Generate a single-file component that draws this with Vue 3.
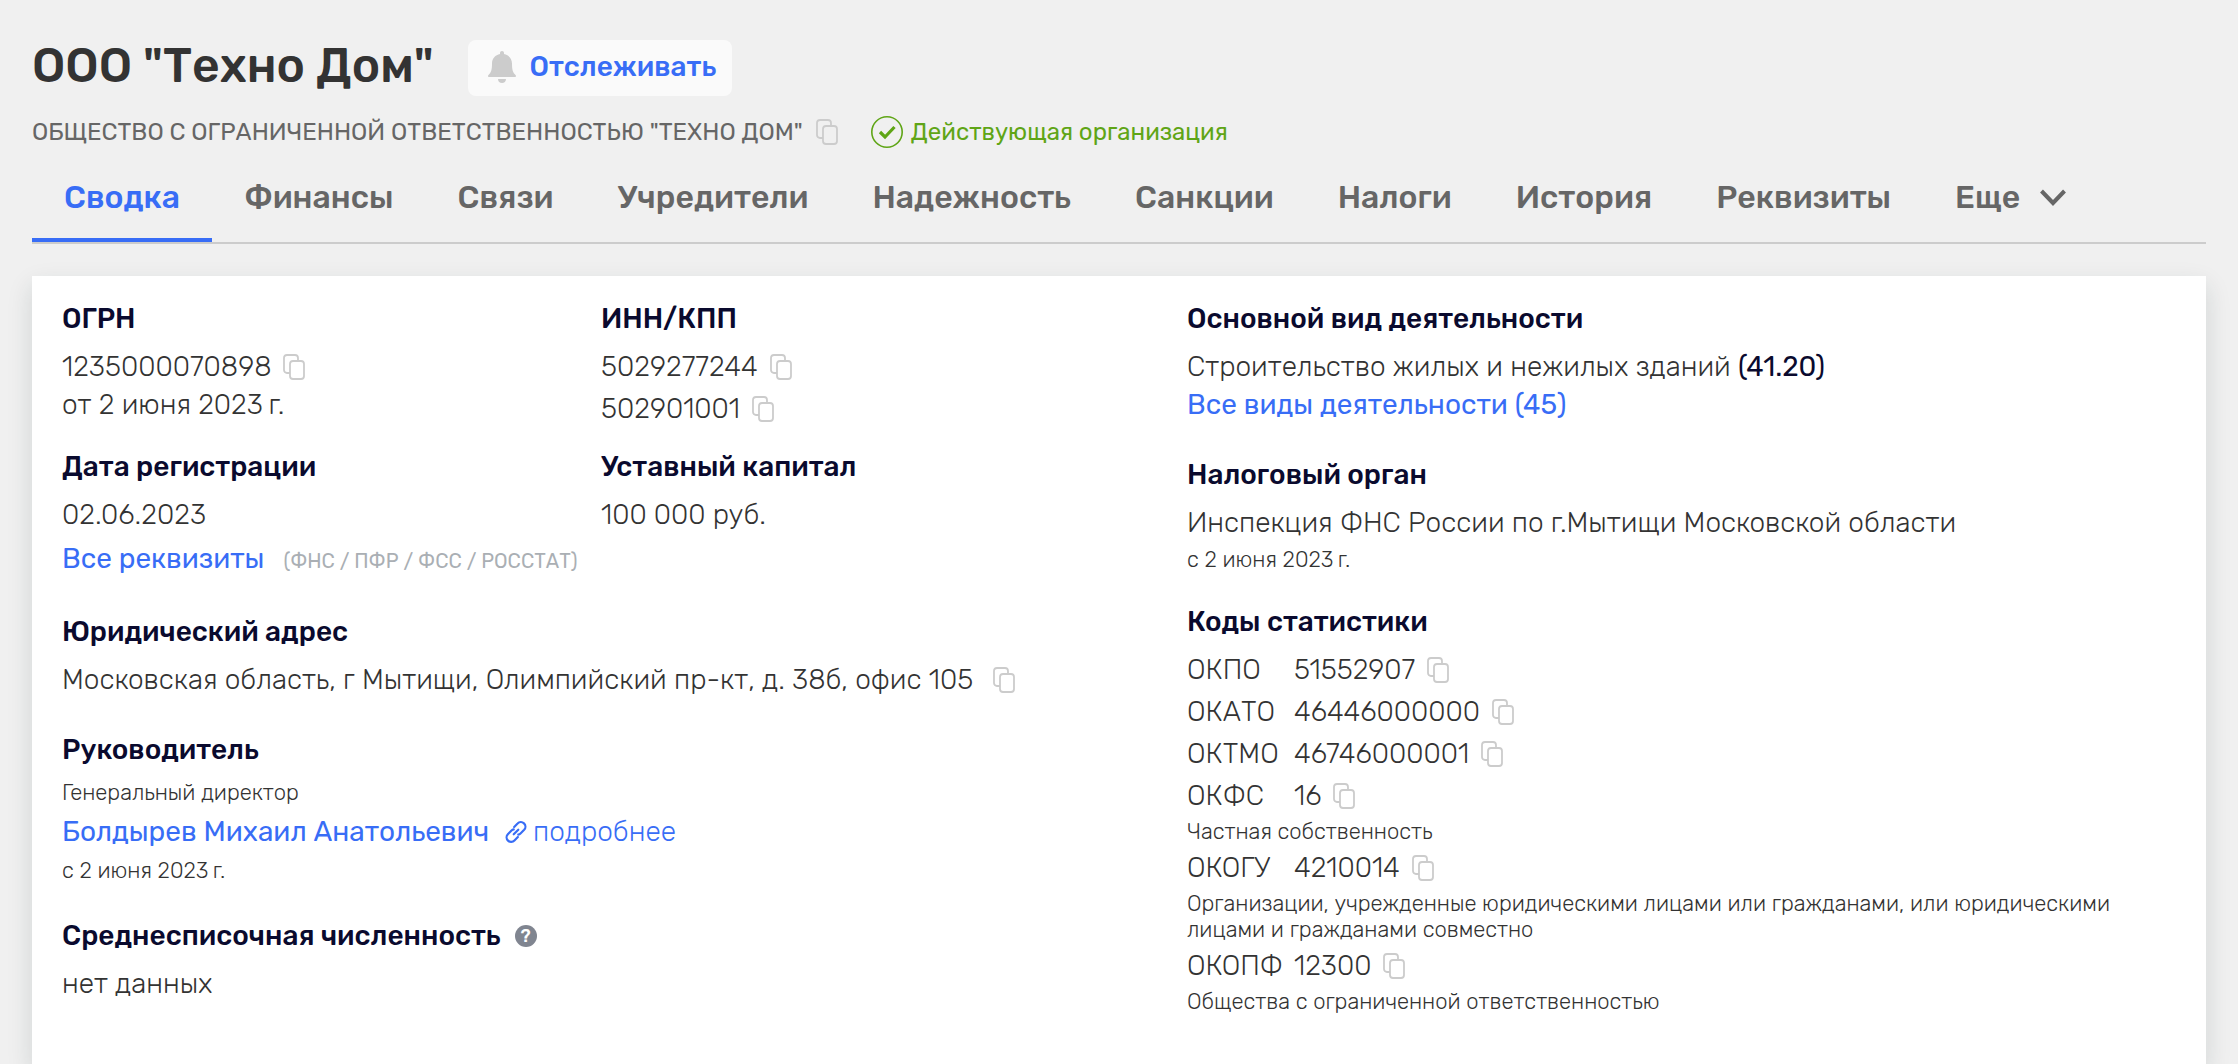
<script setup>
import { h } from 'vue'

const tabs = ['Сводка', 'Финансы', 'Связи', 'Учредители', 'Надежность', 'Санкции', 'Налоги', 'История', 'Реквизиты']

const codes = [
  { name: 'ОКПО', value: '51552907' },
  { name: 'ОКАТО', value: '46446000000' },
  { name: 'ОКТМО', value: '46746000001' },
  { name: 'ОКФС', value: '16', note: 'Частная собственность' },
  { name: 'ОКОГУ', value: '4210014', note: 'Организации, учрежденные юридическими лицами или гражданами, или юридическими лицами и гражданами совместно' },
  { name: 'ОКОПФ', value: '12300', note: 'Общества с ограниченной ответственностью' },
]

const CopyButton = () =>
  h('button', { type: 'button', class: 'copy', 'aria-label': 'Копировать' }, [
    h('svg', { width: 22, height: 26, viewBox: '0 0 22 26', fill: 'none', stroke: '#ccc', 'stroke-width': 1.8 }, [
      h('path', { d: 'M7 19H4a3 3 0 0 1-3-3V4a3 3 0 0 1 3-3h8a3 3 0 0 1 3 3v3' }),
      h('rect', { x: 7, y: 7, width: 14, height: 18, rx: 3 }),
    ]),
  ])
</script>

<template>
  <div class="page">
    <header>
      <div class="title-row">
        <h1>ООО "Техно Дом"</h1>
        <button type="button" class="track">
          <svg width="28" height="32" viewBox="0 0 28 32" fill="#ccc">
            <path d="M14 0c1.200 0 2 .9 2 2v1c4.600.9 8 4.600 8 9.500 0 7 1 9 3.500 11.500.9.9.5 2-.7 2H1.200C0 26-.4 24.900.5 24 3 21.500 4 19.500 4 12.500 4 7.600 7.400 3.900 12 3V2c0-1.100.8-2 2-2z" />
            <path d="M10 28h8c0 2.400-1.700 4-4 4s-4-1.600-4-4z" />
          </svg>
          Отслеживать
        </button>
      </div>
      <div class="sub-row">
        <span>ОБЩЕСТВО С ОГРАНИЧЕННОЙ ОТВЕТСТВЕННОСТЬЮ "ТЕХНО ДОМ"</span>
        <CopyButton />
        <span class="status">
          <svg width="32" height="32" viewBox="0 0 32 32" fill="none" stroke="#5fa516">
            <circle cx="16" cy="16" r="15.2" stroke-width="1.6" />
            <path d="M9 16l5 5 9.500-10" stroke-width="3.2" />
          </svg>
          Действующая организация
        </span>
      </div>
      <nav>
        <a v-for="(t, i) in tabs" :key="t" href="#" :class="{ active: i === 0 }">{{ t }}</a>
        <button type="button" class="more">
          Еще
          <svg width="26" height="17" viewBox="0 0 26 17" fill="none" stroke="#666" stroke-width="4"><path d="M1.500 2L13 14 24.500 2" /></svg>
        </button>
      </nav>
    </header>

    <main>
      <div class="left">
        <div class="pair">
          <section>
            <h2>ОГРН</h2>
            <div class="row">1235000070898<CopyButton /></div>
            <div class="line">от 2 июня 2023&thinsp;г.</div>
          </section>
          <section>
            <h2>ИНН/КПП</h2>
            <div class="row">5029277244<CopyButton /></div>
            <div class="row">502901001<CopyButton /></div>
          </section>
        </div>
        <div class="pair second">
          <section>
            <h2>Дата регистрации</h2>
            <div class="row">02.06.2023</div>
          </section>
          <section>
            <h2>Уставный капитал</h2>
            <div class="row">100 000 руб.</div>
          </section>
        </div>
        <div class="link-row">
          <a href="#">Все реквизиты</a>
          <span class="hint">(ФНС / ПФР / ФСС / РОССТАТ)</span>
        </div>
        <section class="block">
          <h2>Юридический адрес</h2>
          <div class="row address">Московская область, г Мытищи, Олимпийский пр-кт, д. 38б, офис 105<CopyButton /></div>
        </section>
        <section class="block">
          <h2>Руководитель</h2>
          <div class="small">Генеральный директор</div>
          <div class="link-row">
            <a href="#">Болдырев Михаил Анатольевич</a>
            <a href="#" class="details">
              <svg width="22" height="22" viewBox="0 0 24 24" fill="none" stroke="currentColor" stroke-width="2.400" stroke-linecap="round">
                <path d="M10 6.500l3.700-3.700a4.600 4.600 0 0 1 7.200 6.800l-4 4a4.600 4.600 0 0 1-2.400 1.300" />
                <path d="M14 17.500l-3.700 3.700a4.600 4.600 0 0 1-7.200-6.800l4-4a4.600 4.600 0 0 1 2.400-1.300" />
                <path d="M9.500 14.500l5-5" />
              </svg>
              подробнее
            </a>
          </div>
          <div class="small">с 2 июня 2023&thinsp;г.</div>
        </section>
        <section class="block">
          <h2>Среднесписочная численность <button type="button" class="help">?</button></h2>
          <div class="row">нет данных</div>
        </section>
      </div>

      <div class="right">
        <section>
          <h2>Основной вид деятельности</h2>
          <div class="row"><span>Строительство жилых и нежилых зданий <strong>(41.20)</strong></span></div>
          <div class="line"><a href="#">Все виды деятельности (45)</a></div>
        </section>
        <section class="tax">
          <h2>Налоговый орган</h2>
          <div class="row">Инспекция ФНС России по г.Мытищи Московской области</div>
          <div class="small">с 2 июня 2023&thinsp;г.</div>
        </section>
        <section class="stats">
          <h2>Коды статистики</h2>
          <div v-for="c in codes" :key="c.name">
            <div class="row"><span class="code-name">{{ c.name }}</span>{{ c.value }}<CopyButton /></div>
            <p v-if="c.note" class="note">{{ c.note }}</p>
          </div>
        </section>
      </div>
    </main>
  </div>
</template>

<style>
body {
  margin: 0;
  background: #f0f0f0;
}
.copy {
  display: flex;
  flex: none;
  margin: 0 0 0 12px;
  padding: 0;
  border: 0;
  background: none;
  cursor: pointer;
}
</style>

<style scoped>
.page {
  box-sizing: border-box;
  display: flex;
  flex-direction: column;
  min-height: 100vh;
  padding: 40px 32px 0;
  overflow: hidden;
  font: 300 28px/34px Rubik, Roboto, sans-serif;
  color: #333;
}
a {
  color: #386df6;
  font-weight: 400;
  text-decoration: none;
}
button {
  font: inherit;
  cursor: pointer;
}
h1 {
  margin: 0;
  font-size: 48px;
  font-weight: 500;
  line-height: 52px;
}
.title-row {
  display: flex;
  gap: 34px;
}
.track {
  display: flex;
  align-items: center;
  gap: 14px;
  height: 56px;
  padding: 0 16px 2px 20px;
  border: 0;
  border-radius: 8px;
  background: #fafafa;
  color: #386df6;
  font-weight: 500;
}
.sub-row {
  box-sizing: border-box;
  display: flex;
  align-items: center;
  height: 60px;
  padding-top: 12px;
  font-size: 24px;
  font-weight: 400;
  color: #666;
}
.sub-row .copy {
  margin-left: 13px;
}
.status {
  display: flex;
  align-items: center;
  gap: 8px;
  margin-left: 33px;
  color: #5fa516;
}
nav {
  display: flex;
  border-bottom: 2px solid #ccc;
}
nav a,
.more {
  padding: 0 32px;
  border: 0;
  border-bottom: 4px solid transparent;
  background: none;
  color: #666;
  font-size: 32px;
  font-weight: 500;
  line-height: 82px;
}
nav a.active {
  border-color: #386df6;
  color: #386df6;
}
.more {
  display: flex;
  align-items: center;
  gap: 20px;
}
main {
  display: flex;
  flex: 1;
  margin-top: 32px;
  padding: 24px 30px 40px;
  background: #fff;
  box-shadow: 0 10px 24px rgba(20, 50, 50, .14);
}
.left {
  flex: 1125;
}
.right {
  flex: 989;
}
.pair {
  display: grid;
  grid-template-columns: 539fr 586fr;
}
.second {
  margin-top: 18px;
}
h2 {
  display: flex;
  align-items: center;
  margin: 0 0 8px;
  font-size: 28px;
  font-weight: 500;
  line-height: 38px;
  color: #0a0a2e;
}
.row {
  display: flex;
  align-items: center;
  min-height: 42px;
}
strong {
  font-weight: 400;
  color: #0a0a2e;
}
.address .copy {
  margin-left: 20px;
}
.link-row {
  display: flex;
  align-items: baseline;
  height: 46px;
  line-height: 46px;
}
.hint {
  margin-left: 19px;
  font-size: 20px;
  font-weight: 400;
  color: #aaafb4;
}
.details {
  display: flex;
  align-items: baseline;
  gap: 6px;
  margin-left: 16px;
  font-weight: 300;
}
.details svg {
  align-self: center;
}
.block {
  margin-top: 30px;
}
.link-row + .block {
  margin-top: 31px;
}
.tax {
  margin-top: 34px;
}
.stats {
  margin-top: 27px;
}
.small {
  font-size: 22px;
  line-height: 32px;
}
.help {
  width: 22px;
  height: 22px;
  margin-left: 14px;
  padding: 0;
  border: 0;
  border-radius: 50%;
  background: #808590;
  color: #fff;
  font-size: 18px;
  font-weight: 500;
  line-height: 22px;
}
.code-name {
  width: 107px;
}
.note {
  margin: 0;
  padding: 2px 0;
  font-size: 22px;
  line-height: 26px;
}
</style>
